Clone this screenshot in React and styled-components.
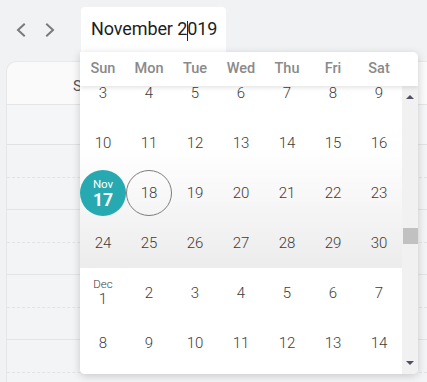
import React from "react";
import styled, { createGlobalStyle } from "styled-components";

const Global = createGlobalStyle`
  html, body { margin: 0; padding: 0; }
  body {
    background: #f1f2f4;
    font-family: Roboto, "Liberation Sans", sans-serif;
    width: 427px;
    height: 382px;
    overflow: hidden;
  }
`;

const Page = styled.div`
  position: relative;
  width: 427px;
  height: 382px;
  overflow: hidden;
`;

const Toolbar = styled.div`
  display: flex;
  align-items: flex-start;
  height: 61px;
  padding: 7px 0 0 6px;
  box-sizing: border-box;
`;

const NavButton = styled.button`
  width: 29px;
  height: 45px;
  border: 0;
  background: transparent;
  padding: 0;
  display: flex;
  align-items: center;
  justify-content: center;
  color: #7a7a7a;
`;

const InputWrap = styled.div`
  position: relative;
  margin-left: 17px;
`;

const DateInput = styled.div`
  width: 145px;
  height: 45px;
  background: #fff;
  border-radius: 4px 4px 0 0;
  box-sizing: border-box;
  padding-left: 10px;
  display: flex;
  align-items: center;
  font-size: 18px;
  color: #1e1e1e;
  letter-spacing: -0.1px;
`;

const Caret = styled.span`
  display: inline-block;
  width: 1px;
  height: 20px;
  background: #222;
  margin: 0 -0.5px;
  vertical-align: middle;
`;

const Card = styled.div`
  margin-left: 6px;
  background: #f3f4f6;
  border-top-left-radius: 10px;
  border-left: 1px solid #e5e6e8;
  border-top: 1px solid #e8e9eb;
  height: 330px;
`;

const CardHeader = styled.div`
  height: 43px;
  box-sizing: border-box;
  background-color: #fafafb;
  background-image: radial-gradient(#e9e9eb 0.5px, transparent 0.7px);
  background-size: 8px 8px;
  border-top-left-radius: 10px;
  border-bottom: 1px solid #e4e5e7;
  display: flex;
  align-items: center;
  padding: 5px 0 0 66px;
  font-size: 15px;
  color: #555;
`;

const AllDayBand = styled.div`
  height: 39px;
  background-color: #f5f6f7;
  border-bottom: 1px solid #e1e2e4;
`;

const SlotRow = styled.div`
  height: 32.5px;
  box-sizing: border-box;
  border-bottom: 1px ${(p) => (p.$dashed ? "dashed" : "solid")} #e2e3e5;
`;

const Popup = styled.div`
  position: absolute;
  left: -1px;
  top: 45px;
  width: 338px;
  height: 322px;
  background: #fff;
  border-radius: 0 5px 5px 5px;
  box-shadow: 0 2px 8px rgba(0, 0, 0, 0.18);
  display: flex;
  flex-direction: column;
  overflow: hidden;
`;

const WeekHeader = styled.div`
  position: relative;
  z-index: 2;
  height: 34px;
  display: grid;
  grid-template-columns: repeat(7, 46px) 16px;
  background: #fff;
  border-radius: 0 5px 0 0;
  box-shadow: 0 2px 4px rgba(0, 0, 0, 0.1);
`;

const WeekDay = styled.div`
  display: flex;
  align-items: center;
  justify-content: center;
  font-size: 14.5px;
  font-weight: 500;
  color: #8a8a8a;
  padding-bottom: 1px;
`;

const Body = styled.div`
  flex: 1;
  display: flex;
  overflow: hidden;
`;

const Days = styled.div`
  width: 322px;
  overflow: hidden;
`;

const DaysInner = styled.div`
  margin-top: -18px;
`;

const Month = styled.div`
  background: ${(p) =>
    p.$shaded ? "linear-gradient(to bottom, #ffffff 40%, #ececec 100%)" : "#fff"};
`;

const Week = styled.div`
  display: grid;
  grid-template-columns: repeat(7, 46px);
  height: 50px;
`;

const Day = styled.div`
  display: flex;
  align-items: center;
  justify-content: center;
`;

const DayNum = styled.div`
  width: 46px;
  height: 46px;
  box-sizing: border-box;
  border-radius: 50%;
  display: flex;
  flex-direction: column;
  align-items: center;
  justify-content: center;
  font-size: 15px;
  font-weight: 300;
  color: #3c3c3c;
  line-height: 1;
  border: ${(p) => (p.$today ? "1px solid #7d7d7d" : "1px solid transparent")};
  background: ${(p) => (p.$selected ? "#27a9b1" : "transparent")};
  ${(p) => p.$selected && "color: #fff; font-weight: 700; font-size: 17.5px; padding-top: 2px;"}
`;

const MonthLabel = styled.span`
  font-size: 11.5px;
  font-weight: ${(p) => (p.$light ? 400 : 300)};
  line-height: 1;
  margin-bottom: 1px;
`;

const Scrollbar = styled.div`
  width: 16px;
  background: #f1f1f1;
  position: relative;
  display: flex;
  flex-direction: column;
  align-items: center;
  justify-content: space-between;
  padding: 9px 0 9px;
  box-sizing: border-box;
`;

const Thumb = styled.div`
  position: absolute;
  left: 1px;
  top: 142px;
  width: 15px;
  height: 16px;
  background: #c1c1c1;
`;

const Arrow = styled.div`
  width: 0;
  height: 0;
  border-left: 4px solid transparent;
  border-right: 4px solid transparent;
  ${(p) =>
    p.$down
      ? "border-top: 4px solid #505061;"
      : "border-bottom: 4px solid #505061;"}
`;

const Chevron = ({ dir }) => (
  <svg width="12" height="14" viewBox="0 0 12 14" fill="none">
    <path
      d={dir === "left" ? "M9 1.5L3 7l6 5.5" : "M3 1.5L9 7l-6 5.5"}
      stroke="currentColor"
      strokeWidth="2"
      strokeLinecap="square"
    />
  </svg>
);

const dayNames = ["Sun", "Mon", "Tue", "Wed", "Thu", "Fri", "Sat"];

const nov = [
  [3, 4, 5, 6, 7, 8, 9],
  [10, 11, 12, 13, 14, 15, 16],
  [17, 18, 19, 20, 21, 22, 23],
  [24, 25, 26, 27, 28, 29, 30],
];
const dec = [
  [1, 2, 3, 4, 5, 6, 7],
  [8, 9, 10, 11, 12, 13, 14],
  [15, 16, 17, 18, 19, 20, 21],
];

export default function App() {
  return (
    <Page>
      <Global />
      <Toolbar>
        <NavButton aria-label="previous">
          <Chevron dir="left" />
        </NavButton>
        <NavButton aria-label="next">
          <Chevron dir="right" />
        </NavButton>
        <InputWrap>
          <DateInput>
            <span>
              November 2<Caret />019
            </span>
          </DateInput>
          <Popup>
            <WeekHeader>
              {dayNames.map((d) => (
                <WeekDay key={d}>{d}</WeekDay>
              ))}
              <div />
            </WeekHeader>
            <Body>
              <Days>
                <DaysInner>
                  <Month $shaded>
                    {nov.map((w, i) => (
                      <Week key={i}>
                        {w.map((d) => (
                          <Day key={d}>
                            <DayNum $selected={d === 17} $today={d === 18}>
                              {d === 17 && <MonthLabel $light>Nov</MonthLabel>}
                              {d}
                            </DayNum>
                          </Day>
                        ))}
                      </Week>
                    ))}
                  </Month>
                  <Month>
                    {dec.map((w, i) => (
                      <Week key={i}>
                        {w.map((d) => (
                          <Day key={d}>
                            <DayNum>
                              {d === 1 && <MonthLabel>Dec</MonthLabel>}
                              {d}
                            </DayNum>
                          </Day>
                        ))}
                      </Week>
                    ))}
                  </Month>
                </DaysInner>
              </Days>
              <Scrollbar>
                <Arrow />
                <Thumb />
                <Arrow $down />
              </Scrollbar>
            </Body>
          </Popup>
        </InputWrap>
      </Toolbar>
      <Card>
        <CardHeader>Sunday</CardHeader>
        <AllDayBand />
        {Array.from({ length: 8 }).map((_, i) => (
          <SlotRow key={i} $dashed={i % 2 === 0} />
        ))}
      </Card>
    </Page>
  );
}
